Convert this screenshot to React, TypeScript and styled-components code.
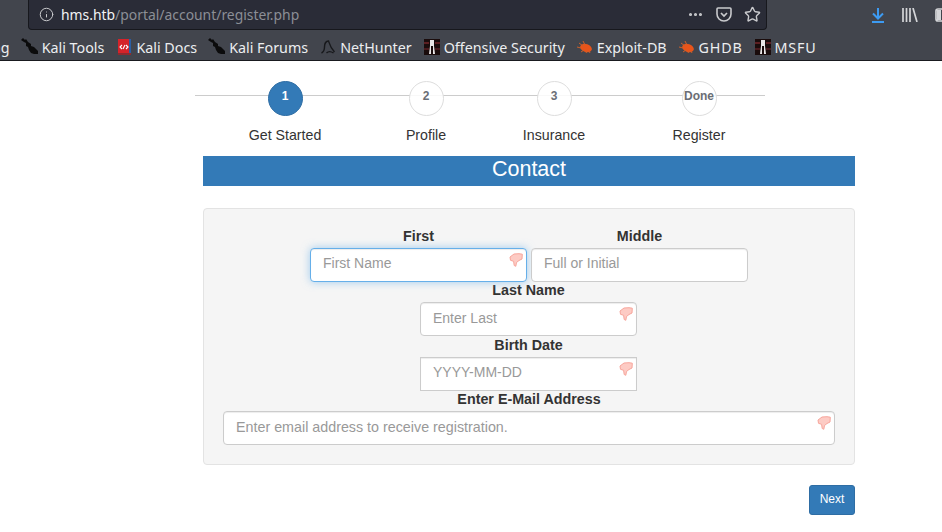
import { createGlobalStyle, styled } from 'styled-components';
import { Info, MoreHorizontal, Star } from 'lucide-react';

const GlobalStyle = createGlobalStyle`
    html, body {
        margin: 0;
        padding: 0;
        background: #fff;
        overflow: hidden;
    }
    * {
        box-sizing: border-box;
    }
`;

const Page = styled.div`
    width: 942px;
    height: 532px;
    overflow: hidden;
    font-family: 'Liberation Sans', Arial, sans-serif;
    color: #333;
`;

/* browser chrome */
const Chrome = styled.header`
    height: 61px;
    background: #42454d;
    border-bottom: 1px solid #191a1f;
    font-family: 'Noto Sans', sans-serif;
    overflow: hidden;
`;

const NavRow = styled.div`
    display: flex;
    align-items: flex-start;
    height: 34px;
    padding-left: 28px;
`;

const UrlBar = styled.div`
    display: flex;
    flex-shrink: 0;
    align-items: center;
    width: 739px;
    height: 30px;
    padding: 0 5px 0 10px;
    background: #2a2c37;
    border: 1px solid #17181d;
    border-top: none;
    border-radius: 0 0 4px 4px;
    color: #c9cacd;
`;

const Url = styled.div`
    margin-left: 7px;
    font-size: 13.9px;
    color: #8c8f96;
    white-space: nowrap;
`;

const UrlHost = styled.span`
    color: #f2f3f5;
`;

const UrlActions = styled.div`
    display: flex;
    align-items: center;
    gap: 12px;
    margin-left: auto;
`;

const Toolbar = styled.div`
    display: flex;
    flex-shrink: 0;
    align-items: center;
    gap: 17px;
    height: 30px;
    margin-left: 104px;
`;

const BookmarkRow = styled.div`
    display: flex;
    align-items: center;
    gap: 12px;
    height: 26px;
    white-space: nowrap;
    font-size: 14.3px;
    color: #eceef0;
`;

const Bookmark = styled.div<{ $caps?: boolean }>`
    display: flex;
    flex-shrink: 0;
    align-items: center;
    gap: 4px;
    letter-spacing: ${(props) => (props.$caps ? '0.8px' : 'normal')};

    &:first-child {
        margin-left: -8px;
    }
`;

function KaliIcon() {
    return (
        <svg width="16" height="16" viewBox="0 0 16 16" overflow="visible">
            <path
                d="M-1 1 L1 -1 L3 1 L4 0 L6 3 L9 5 L9 7 L12 8 L16 12 L16 15 L12 15 L9 14 L7 11 L6 8 L4 7 L4 4 L2 3 Z"
                fill="#0b0b0c"
            />
        </svg>
    );
}

function DocsIcon() {
    return (
        <svg width="16" height="16" viewBox="-2 0 16 16">
            <rect width="13" height="16" fill="#d5232a" />
            <rect x="11" width="2" height="16" fill="#2a5fa5" />
            <rect y="14" width="13" height="2" fill="#8e2a2f" />
            <path d="M4 6 L2 8 L4 10 M8 6 L10 8 L8 10 M5 10 L7 6" fill="none" stroke="#fff" strokeWidth="1.1" />
        </svg>
    );
}

function HunterIcon() {
    return (
        <svg width="16" height="14" viewBox="0 0 15 14">
            <path
                d="M1 13 C3 12 4 10 4 7 C4 3 6 1 8 1 C9 4 10 8 14 12 M6 13 C8 11 10 11 13 13"
                fill="none"
                stroke="#17181b"
                strokeWidth="1.4"
            />
        </svg>
    );
}

function OffsecIcon() {
    return (
        <svg width="16" height="16" viewBox="0 0 16 16">
            <rect width="16" height="16" fill="#1a0c0c" />
            <rect x="0" y="3" width="5" height="2" fill="#5c1f22" />
            <rect x="11" y="3" width="5" height="2" fill="#5c1f22" />
            <rect x="0" y="9" width="5" height="2" fill="#4a1a1d" />
            <rect x="11" y="9" width="5" height="2" fill="#4a1a1d" />
            <path d="M6 1 H10 V7 L11 15 H9 V7 H7 V15 H5 L6 7 Z" fill="#e9e6e6" />
        </svg>
    );
}

function BugIcon() {
    return (
        <svg width="16" height="14" viewBox="0 0 16 14">
            <ellipse cx="9" cy="8" rx="6" ry="4" transform="rotate(20 9 8)" fill="#e8541a" />
            <path
                d="M0 7 L4 8 M2 3 L6 6 M6 1 L8 5 M4 12 L7 10 M9 13 L10 11 M13 13 L12 11"
                stroke="#c9602c"
                strokeWidth="1"
            />
        </svg>
    );
}

function PocketIcon() {
    return (
        <svg width="16" height="15" viewBox="0 0 16 15">
            <path
                d="M2 1 H14 A1 1 0 0 1 15 2 V7 A7 7 0 0 1 1 7 V2 A1 1 0 0 1 2 1 Z"
                fill="none"
                stroke="#c9cacd"
                strokeWidth="1.6"
            />
            <path d="M5 6 L8 9 L11 6" fill="none" stroke="#c9cacd" strokeWidth="1.7" />
        </svg>
    );
}

function DownloadIcon() {
    return (
        <svg width="14" height="16" viewBox="0 0 14 16">
            <path d="M7 1 V11 M2 6.5 L7 11.5 L12 6.5" fill="none" stroke="#3d9bf2" strokeWidth="2" />
            <rect x="1" y="14" width="12" height="2" fill="#3d9bf2" />
        </svg>
    );
}

function LibraryIcon() {
    return (
        <svg width="16" height="14" viewBox="0 0 16 14">
            <path d="M1 0 V14 M4.5 0 V14 M8 0 V14 M11 0 L15 14" fill="none" stroke="#d4d5d8" strokeWidth="1.7" />
        </svg>
    );
}

function SidebarIcon() {
    return (
        <svg width="16" height="14" viewBox="0 0 16 14">
            <rect x="1" y="1" width="14" height="12" rx="2" fill="none" stroke="#d4d5d8" strokeWidth="1.7" />
            <rect x="2" y="2" width="4" height="10" fill="#d4d5d8" />
        </svg>
    );
}

/* wizard steps */
const Stepper = styled.div`
    position: relative;
    display: grid;
    grid-template-columns: 180px 102px 154px 136px;
    width: 570px;
    height: 95px;
    margin-left: 195px;
    padding-top: 20px;

    &::before {
        content: '';
        position: absolute;
        left: 0;
        right: 0;
        top: 34px;
        height: 1px;
        background: #ccc;
    }
`;

const Step = styled.div`
    position: relative;
    display: flex;
    flex-direction: column;
    align-items: center;
    gap: 11px;
    font-size: 14.2px;
    line-height: 16px;
`;

const StepDot = styled.div<{ $active?: boolean }>`
    width: 35px;
    height: 35px;
    padding-top: 6px;
    text-align: center;
    border-radius: 50%;
    font-size: 12px;
    font-weight: 700;
    line-height: 16px;
    color: ${(props) => (props.$active ? '#fff' : '#6b6e75')};
    background: ${(props) => (props.$active ? '#337ab7' : 'rgba(255, 255, 255, 0.85)')};
    border: 1px solid ${(props) => (props.$active ? '#2e6da4' : '#ddd')};
`;

/* form */
const Content = styled.main`
    width: 652px;
    margin-left: 203px;
`;

const Banner = styled.div`
    height: 30px;
    background: #337ab7;
    color: #fff;
    font-size: 21.5px;
    line-height: 26px;
    text-align: center;
`;

const Well = styled.div`
    margin-top: 22px;
    padding: 19px;
    height: 257px;
    background: #f5f5f5;
    border: 1px solid #e3e3e3;
    border-radius: 4px;
`;

const FieldRow = styled.div<{ $single?: boolean }>`
    display: flex;
    justify-content: center;
    gap: 4px;
    padding-right: ${(props) => (props.$single ? '1px' : '0')};
`;

const Field = styled.div<{ $wide?: boolean; $pushed?: boolean }>`
    width: ${(props) => (props.$wide ? '100%' : '217px')};
    margin-top: ${(props) => (props.$pushed ? '1px' : '0')};

    label {
        display: block;
        margin-bottom: 4px;
        font-size: 14.3px;
        font-weight: 700;
        line-height: 16px;
        text-align: center;
    }
`;

const InputWrap = styled.div`
    position: relative;
`;

const Input = styled.input<{ $focused?: boolean; $square?: boolean; $lift?: number; $spread?: boolean }>`
    display: block;
    width: 100%;
    height: 34px;
    padding: ${(props) => 6 - (props.$lift ?? 1)}px 12px ${(props) => 6 + (props.$lift ?? 1)}px;
    background: #fff;
    color: #555;
    font-family: inherit;
    font-size: ${(props) => (props.$spread ? '14.3px' : '14px')};
    outline: none;
    border: 1px solid ${(props) => (props.$focused ? '#66afe9' : '#ccc')};
    border-radius: ${(props) => (props.$square ? '0' : '4px')};
    box-shadow: ${(props) =>
        props.$focused
            ? 'inset 0 1px 1px rgba(0, 0, 0, 0.075), 0 0 8px rgba(102, 175, 233, 0.6)'
            : 'inset 0 1px 1px rgba(0, 0, 0, 0.075)'};

    &::placeholder {
        color: #999;
        opacity: 1;
    }
`;

const Hint = styled.span`
    position: absolute;
    top: 5px;
    right: 4px;
    width: 14px;
    height: 14px;
`;

const Actions = styled.div`
    display: flex;
    justify-content: flex-end;
    margin-top: 20px;
`;

const NextButton = styled.button`
    width: 46px;
    height: 30px;
    padding: 0 0 2px;
    background: #337ab7;
    border: 1px solid #2e6da4;
    border-radius: 3px;
    color: #fff;
    font-family: inherit;
    font-size: 12px;
`;

function ThumbDown() {
    return (
        <Hint>
            <svg width="14" height="14" viewBox="0 0 14 14">
                <path
                    d="M1 4 L5 1 L10 0.7 L13.3 1.2 L13 6 L10 7.5 L7.5 9.5 L6.8 13.3 L5.2 12.5 L4.6 8.3 L1.5 7.3 Z"
                    fill="#fdcbc4"
                    stroke="#f7a59b"
                    strokeWidth="1"
                    strokeLinejoin="round"
                />
            </svg>
        </Hint>
    );
}

const steps = [
    { dot: '1', label: 'Get Started', active: true },
    { dot: '2', label: 'Profile' },
    { dot: '3', label: 'Insurance' },
    { dot: 'Done', label: 'Register' },
];

export default function App() {
    return (
        <Page>
            <GlobalStyle />
            <Chrome>
                <NavRow>
                    <UrlBar>
                        <Info size={15} strokeWidth={1.6} />
                        <Url>
                            <UrlHost>hms.htb</UrlHost>/portal/account/register.php
                        </Url>
                        <UrlActions>
                            <MoreHorizontal size={17} strokeWidth={2.4} />
                            <PocketIcon />
                            <Star size={17} strokeWidth={2} />
                        </UrlActions>
                    </UrlBar>
                    <Toolbar>
                        <DownloadIcon />
                        <LibraryIcon />
                        <SidebarIcon />
                    </Toolbar>
                </NavRow>
                <BookmarkRow>
                    <Bookmark>ng</Bookmark>
                    <Bookmark>
                        <KaliIcon />
                        Kali Tools
                    </Bookmark>
                    <Bookmark>
                        <DocsIcon />
                        Kali Docs
                    </Bookmark>
                    <Bookmark>
                        <KaliIcon />
                        Kali Forums
                    </Bookmark>
                    <Bookmark>
                        <HunterIcon />
                        NetHunter
                    </Bookmark>
                    <Bookmark>
                        <OffsecIcon />
                        Offensive Security
                    </Bookmark>
                    <Bookmark>
                        <BugIcon />
                        Exploit-DB
                    </Bookmark>
                    <Bookmark $caps>
                        <BugIcon />
                        GHDB
                    </Bookmark>
                    <Bookmark $caps>
                        <OffsecIcon />
                        MSFU
                    </Bookmark>
                </BookmarkRow>
            </Chrome>
            <Stepper>
                {steps.map((step) => (
                    <Step key={step.label}>
                        <StepDot $active={step.active}>{step.dot}</StepDot>
                        {step.label}
                    </Step>
                ))}
            </Stepper>
            <Content>
                <Banner>Contact</Banner>
                <Well>
                    <FieldRow>
                        <Field>
                            <label>First</label>
                            <InputWrap>
                                <Input $focused $lift={2} placeholder="First Name" />
                                <ThumbDown />
                            </InputWrap>
                        </Field>
                        <Field>
                            <label>Middle</label>
                            <InputWrap>
                                <Input $lift={2} placeholder="Full or Initial" />
                            </InputWrap>
                        </Field>
                    </FieldRow>
                    <FieldRow $single>
                        <Field>
                            <label>Last Name</label>
                            <InputWrap>
                                <Input placeholder="Enter Last" />
                                <ThumbDown />
                            </InputWrap>
                        </Field>
                    </FieldRow>
                    <FieldRow $single>
                        <Field $pushed>
                            <label>Birth Date</label>
                            <InputWrap>
                                <Input $square $lift={2} placeholder="YYYY-MM-DD" />
                                <ThumbDown />
                            </InputWrap>
                        </Field>
                    </FieldRow>
                    <FieldRow>
                        <Field $wide>
                            <label>Enter E-Mail Address</label>
                            <InputWrap>
                                <Input $spread placeholder="Enter email address to receive registration." />
                                <ThumbDown />
                            </InputWrap>
                        </Field>
                    </FieldRow>
                </Well>
                <Actions>
                    <NextButton>Next</NextButton>
                </Actions>
            </Content>
        </Page>
    );
}
